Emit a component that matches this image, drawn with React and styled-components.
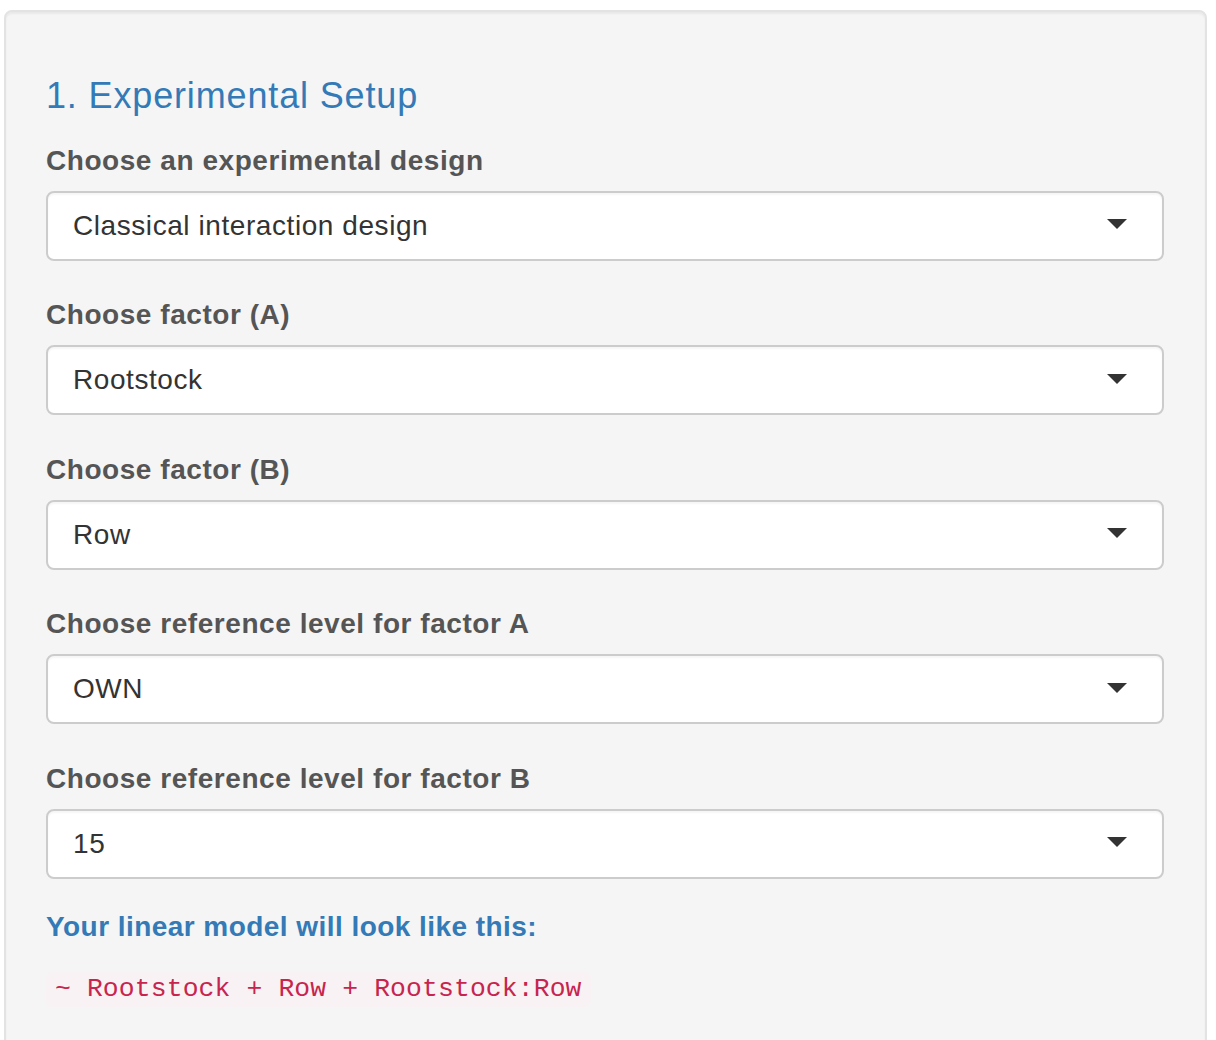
import React from "react";
import styled, { createGlobalStyle } from "styled-components";

const GlobalStyle = createGlobalStyle`
  html, body {
    margin: 0;
    padding: 0;
    background: #ffffff;
  }
  body {
    font-family: "Liberation Sans", Arial, Helvetica, sans-serif;
    color: #333333;
  }
  * { box-sizing: border-box; }
`;

const Well = styled.div`
  margin: 10px 0 0 4px;
  width: 1203px;
  min-height: 1100px;
  background: #f5f5f5;
  border: 2px solid #e3e3e3;
  border-radius: 8px;
  box-shadow: inset 0 2px 2px rgba(0, 0, 0, 0.05);
  padding: 40px 41px 40px 40px;
`;

const Heading = styled.h4`
  margin: 23.5px 0 25.5px 0;
  font-size: 36px;
  line-height: 39.6px;
  font-weight: 400;
  letter-spacing: 0.85px;
  color: #337ab7;
`;

const Fields = styled.div`
  display: flex;
  flex-direction: column;
  gap: 34.5px;
`;

const FormGroup = styled.div`
  display: flex;
  flex-direction: column;
`;

const Label = styled.label`
  font-size: 28px;
  line-height: 40px;
  font-weight: 700;
  letter-spacing: 0.55px;
  color: #555555;
  margin-bottom: 10px;
`;

const SelectBox = styled.div`
  height: 70px;
  display: flex;
  align-items: center;
  background: #ffffff;
  border: 2px solid #cccccc;
  border-radius: 8px;
  padding: 0 35px 0 25px;
  font-size: 28px;
  letter-spacing: 0.57px;
  color: #333333;
  box-shadow: inset 0 2px 2px rgba(0, 0, 0, 0.04);
`;

const SelectValue = styled.span`
  flex: 1;
  line-height: 40px;
`;

const Caret = styled.span`
  width: 0;
  height: 0;
  border-style: solid;
  border-width: 10px 10px 0 10px;
  border-color: #333333 transparent transparent transparent;
  margin-top: -3px;
`;

const ModelTitle = styled.div`
  margin-top: 28.4px;
  font-size: 28px;
  line-height: 40px;
  font-weight: 700;
  letter-spacing: 0.45px;
  color: #337ab7;
`;

const FormulaRow = styled.div`
  margin-top: 24.6px;
`;

const Code = styled.code`
  display: inline-block;
  font-family: "Liberation Mono", "Courier New", monospace;
  font-size: 26.4px;
  line-height: 27px;
  letter-spacing: 0.12px;
  padding: 4px 9px;
  color: #c7254e;
  background: #f9f2f4;
  border-radius: 6px;
  white-space: pre;
`;

const fields = [
  { label: "Choose an experimental design", value: "Classical interaction design" },
  { label: "Choose factor (A)", value: "Rootstock" },
  { label: "Choose factor (B)", value: "Row" },
  { label: "Choose reference level for factor A", value: "OWN" },
  { label: "Choose reference level for factor B", value: "15" },
];

export default function App() {
  return (
    <>
      <GlobalStyle />
      <Well>
        <Heading>1. Experimental Setup</Heading>
        <Fields>
          {fields.map((f) => (
            <FormGroup key={f.label}>
              <Label>{f.label}</Label>
              <SelectBox>
                <SelectValue>{f.value}</SelectValue>
                <Caret />
              </SelectBox>
            </FormGroup>
          ))}
        </Fields>
        <ModelTitle>Your linear model will look like this:</ModelTitle>
        <FormulaRow>
          <Code>~ Rootstock + Row + Rootstock:Row</Code>
        </FormulaRow>
      </Well>
    </>
  );
}
